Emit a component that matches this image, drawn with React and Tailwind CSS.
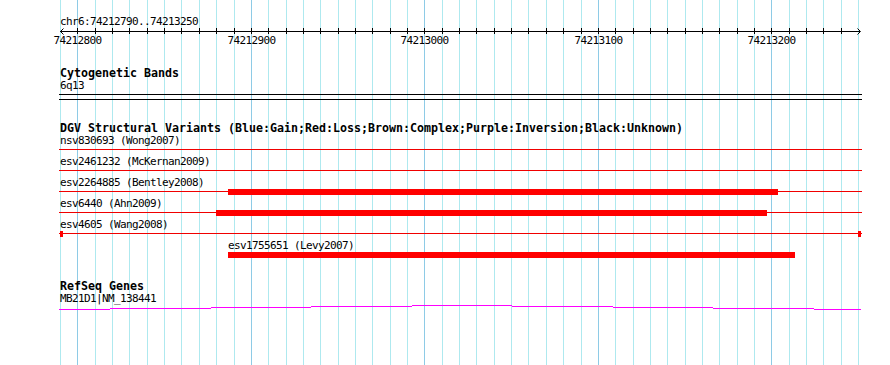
import React from "react";

const START = 74212790;
const END = 74213250;
const xOf = (bp) => Math.round(60 + (bp - START) * 1.735);

const gridBps = [];
for (let bp = START; bp <= END; bp += 10) gridBps.push(bp);

const variants = [
  { name: "nsv830693 (Wong2007)", line: true, bars: [] },
  { name: "esv2461232 (McKernan2009)", line: true, bars: [] },
  { name: "esv2264885 (Bentley2008)", line: true, bars: [[228, 550]] },
  { name: "esv6440 (Ahn2009)", line: true, bars: [[216, 551]] },
  { name: "esv4605 (Wang2008)", line: true, bars: [[60, 3], [858, 3]] },
  { name: "esv1755651 (Levy2007)", labelX: 228, line: false, bars: [[228, 567]] },
];

// gene model drawn as stepped segments [x1, x2, y]
const geneSegs = [
  [59, 110, 4],
  [110, 211, 3],
  [211, 311, 2],
  [311, 412, 1],
  [412, 512, 0],
  [512, 613, 1],
  [613, 713, 2],
  [713, 814, 3],
  [814, 861, 4],
];

function Grid() {
  return (
    <svg className="absolute inset-0" width="890" height="365" shapeRendering="crispEdges">
      {gridBps.map((bp) => (
        <line
          key={bp}
          x1={xOf(bp) + 0.5}
          x2={xOf(bp) + 0.5}
          y1="0"
          y2="365"
          stroke={bp % 100 === 0 ? "#8ecbe6" : "#aee9ef"}
          strokeWidth="1"
        />
      ))}
    </svg>
  );
}

function Ruler() {
  return (
    <svg width="890" height="20" className="block">
      <g shapeRendering="crispEdges" stroke="#000" strokeWidth="1">
        <line x1="60" x2="860" y1="3.5" y2="3.5" />
        {gridBps.slice(1, -1).map((bp) => (
          <line key={bp} x1={xOf(bp) + 0.5} x2={xOf(bp) + 0.5} y1="0" y2="6" />
        ))}
      </g>
      <polyline points="63.5,0.5 60.5,3.5 63.5,6.5" fill="none" stroke="#000" strokeWidth="1" />
      <polyline points="857.5,0.5 860.5,3.5 857.5,6.5" fill="none" stroke="#000" strokeWidth="1" />
      {gridBps
        .filter((bp) => bp % 100 === 0)
        .map((bp) => (
          <text
            key={bp}
            x={xOf(bp) - 23.5}
            y="16"
            fontFamily="'DejaVu Sans Mono', monospace"
            fontSize="11"
            letterSpacing="-0.62"
            fill="#000"
          >
            {bp}
          </text>
        ))}
    </svg>
  );
}

function TrackTitle({ children, className = "" }) {
  return (
    <div className={`h-[14px] pl-[60px] font-['DejaVu_Sans_Mono',monospace] text-[11.63px] font-bold leading-[14px] whitespace-nowrap text-black ${className}`}>
      {children}
    </div>
  );
}

function Label({ children, x = 60 }) {
  return (
    <div
      className="h-[12px] font-['DejaVu_Sans_Mono',monospace] text-[11px] tracking-[-0.62px] leading-[12px] whitespace-nowrap text-black"
      style={{ paddingLeft: x }}
    >
      {children}
    </div>
  );
}

export default function App() {
  return (
    <div className="relative w-[890px] h-[365px] overflow-hidden bg-white">
      <Grid />

      <div className="relative">
        {/* ruler */}
        <div className="pt-[16px]">
          <Label>chr6:74212790..74213250</Label>
        </div>
        <Ruler />

        {/* cytogenetic bands */}
        <TrackTitle className="mt-[18px]">Cytogenetic Bands</TrackTitle>
        <Label>6q13</Label>
        <div className="mt-[2px] ml-[59px] w-[803px] h-[6px] border-y border-black" />

        {/* DGV */}
        <TrackTitle className="mt-[21px]">
          DGV Structural Variants (Blue:Gain;Red:Loss;Brown:Complex;Purple:Inversion;Black:Unknown)
        </TrackTitle>
        {variants.map((v) => (
          <div key={v.name} className="h-[21px]">
            <Label x={v.labelX || 60}>{v.name}</Label>
            <div className="relative h-[6px]">
              {v.line && <div className="absolute top-[2px] left-[59px] w-[803px] h-px bg-[#f00000]" />}
              {v.bars.map(([left, width]) => (
                <div key={left} className="absolute top-0 h-[6px] bg-[#ff0000]" style={{ left, width }} />
              ))}
            </div>
          </div>
        ))}

        {/* RefSeq */}
        <TrackTitle className="mt-[18px]">RefSeq Genes</TrackTitle>
        <Label>MB21D1|NM_138441</Label>
        <svg width="890" height="6" className="block" shapeRendering="crispEdges">
          {geneSegs.map(([x1, x2, y]) => (
            <line key={x1} x1={x1} x2={x2} y1={y + 0.5} y2={y + 0.5} stroke="#ff00ff" strokeWidth="1" />
          ))}
        </svg>
      </div>
    </div>
  );
}
